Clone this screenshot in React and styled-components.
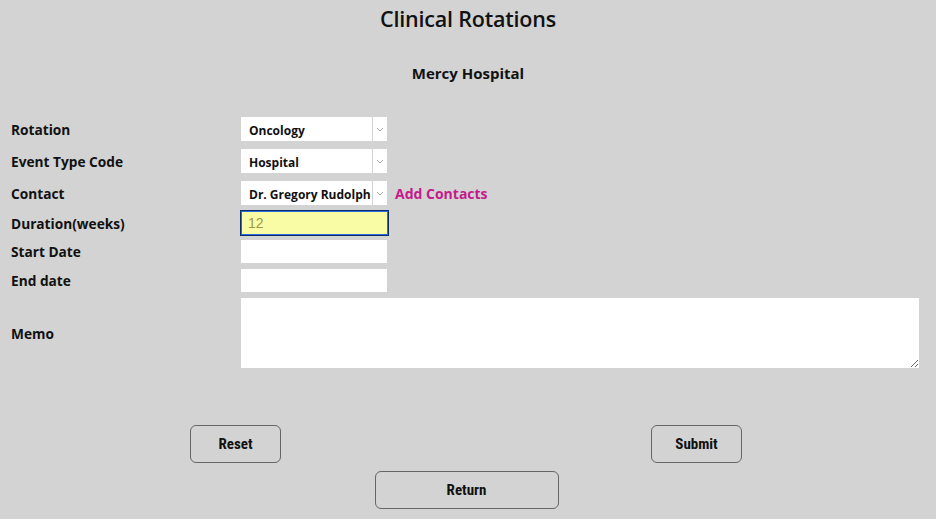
import React from "react";
import styled, { createGlobalStyle } from "styled-components";

const Global = createGlobalStyle`
  html, body { margin: 0; padding: 0; background: #d3d3d3; }
  body { font-family: "Open Sans", Lato, sans-serif; color: #111; }
  * { box-sizing: border-box; }
`;

const Page = styled.div`
  width: 936px;
  height: 519px;
  background: #d3d3d3;
  padding-top: 4px;
  overflow: hidden;
`;

const Title = styled.h1`
  margin: 0;
  text-align: center;
  font-size: 21.5px;
  font-weight: 600;
  line-height: 30px;
  letter-spacing: -0.2px;
`;

const Subtitle = styled.h2`
  margin: 29px 0 0 0;
  text-align: center;
  font-size: 15px;
  font-weight: 700;
  line-height: 20px;
`;

const Form = styled.div`
  margin-top: 34px;
  padding-left: 11px;
  display: flex;
  flex-direction: column;
`;

const Row = styled.div`
  display: flex;
  align-items: center;
  height: ${(p) => p.$h}px;
  margin-bottom: ${(p) => p.$mb || 0}px;
`;

const Label = styled.div`
  width: 230px;
  font-size: 13.7px;
  font-weight: 700;
  color: #111;
`;

const SelectBox = styled.div`
  width: 146px;
  height: 100%;
  display: flex;
  background: #fff;
`;

const SelectText = styled.div`
  flex: 1;
  display: flex;
  align-items: center;
  padding-left: 8px;
  padding-top: 2px;
  font-size: 12px;
  font-weight: 700;
  color: #111;
  white-space: nowrap;
  overflow: hidden;
  border-right: 1px solid #d3d3d3;
`;

const ArrowCell = styled.div`
  width: 14px;
  display: flex;
  align-items: center;
  justify-content: center;
`;

const AddLink = styled.a`
  margin-left: 8px;
  font-size: 14px;
  font-weight: 700;
  color: #c41a8b;
  text-decoration: none;
`;

const TextInput = styled.input`
  width: ${(p) => p.$w || 146}px;
  height: 100%;
  margin: 0 0 0 ${(p) => p.$ml || 0}px;
  border: none;
  outline: none;
  background: #fff;
  padding: 0 7px;
  font-family: "Liberation Sans", Arial, sans-serif;
  font-size: 13px;
`;

const HighlightInput = styled(TextInput)`
  background: #fafca5;
  border: 1px solid #0c2d6b;
  box-shadow: inset 0 0 0 1px #2a6ad8;
  color: #9a9a4a;
  font-size: 14px;
`;

const Memo = styled.textarea`
  width: 678px;
  height: 100%;
  border: none;
  outline: none;
  background: #fff;
  resize: both;
  font-family: "Liberation Sans", Arial, sans-serif;
`;

const ButtonRow = styled.div`
  width: 552px;
  margin: 57px 0 0 190px;
  display: flex;
  justify-content: space-between;
`;

const Button = styled.button`
  width: ${(p) => p.$w}px;
  height: 38px;
  background: #d3d3d3;
  border: 1px solid #666;
  border-radius: 6px;
  font-family: "Liberation Sans Narrow", "Roboto Condensed", "DejaVu Sans Condensed", sans-serif;
  font-weight: 700;
  font-size: 15px;
  color: #111;
  padding: 0;
  cursor: pointer;
`;

const CenterRow = styled.div`
  display: flex;
  justify-content: center;
  margin-top: 8px;
  padding-right: 3px;
`;

const Chevron = () => (
  <svg width="8" height="5" viewBox="0 0 8 5">
    <path d="M1 1 L4 4 L7 1" fill="none" stroke="#aaa" strokeWidth="1" />
  </svg>
);

const FakeSelect = ({ value }) => (
  <SelectBox>
    <SelectText>{value}</SelectText>
    <ArrowCell>
      <Chevron />
    </ArrowCell>
  </SelectBox>
);

export default function App() {
  return (
    <Page>
      <Global />
      <Title>Clinical Rotations</Title>
      <Subtitle>Mercy Hospital</Subtitle>
      <Form>
        <Row $h={24} $mb={8}>
          <Label>Rotation</Label>
          <FakeSelect value="Oncology" />
        </Row>
        <Row $h={24} $mb={8}>
          <Label>Event Type Code</Label>
          <FakeSelect value="Hospital" />
        </Row>
        <Row $h={24} $mb={5}>
          <Label>Contact</Label>
          <FakeSelect value="Dr. Gregory Rudolph" />
          <AddLink href="#">Add Contacts</AddLink>
        </Row>
        <Row $h={26} $mb={4}>
          <Label>Duration(weeks)</Label>
          <HighlightInput $w={149} $ml={-1} defaultValue="12" />
        </Row>
        <Row $h={23} $mb={6}>
          <Label>Start Date</Label>
          <TextInput />
        </Row>
        <Row $h={23} $mb={6}>
          <Label>End date</Label>
          <TextInput />
        </Row>
        <Row $h={70}>
          <Label>Memo</Label>
          <Memo />
        </Row>
      </Form>
      <ButtonRow>
        <Button $w={91}>Reset</Button>
        <Button $w={91}>Submit</Button>
      </ButtonRow>
      <CenterRow>
        <Button $w={184}>Return</Button>
      </CenterRow>
    </Page>
  );
}
